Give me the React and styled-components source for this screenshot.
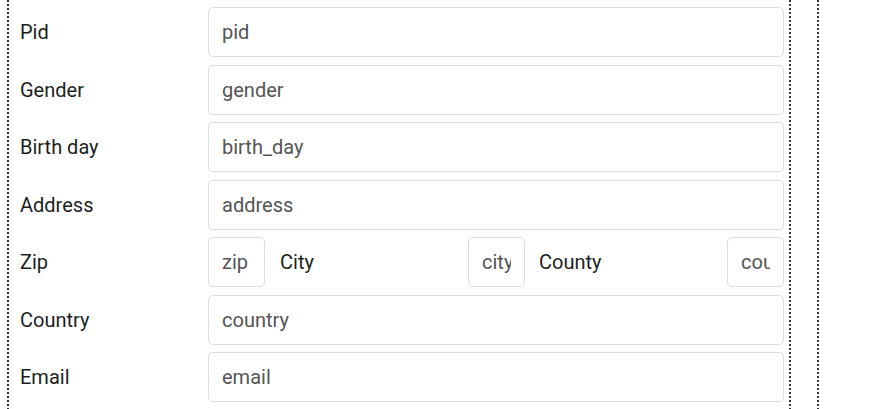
import React from 'react';
import styled, { createGlobalStyle } from "styled-components"

const Global = createGlobalStyle`
    body{
        margin:0;
        font-family:Roboto, "Liberation Sans", sans-serif;
        background:#fff;
    }
`
const dots = "repeating-linear-gradient(to bottom, #333 0 2px, transparent 2px 4px)"

const Page = styled.div`
    display:flex;
    height:409px;
    overflow:hidden;
`
const Panel = styled.div`
    box-sizing:border-box;
    margin-left:7px;
    width:784px;
    padding:7px 7px 0 13px;
    background:${dots} left top / 2px 100% no-repeat, ${dots} right top / 2px 100% no-repeat;
`
const Side = styled.div`
    margin-left:26px;
    flex:1;
    background:${dots} left top / 2px 100% no-repeat;
`
const Form = styled.div`
    display:flex;
    flex-direction:column;
    gap:7.5px;
`
const Row = styled.div`
    display:grid;
    grid-template-columns:${p => p.cols || "188px 1fr"};
    align-items:center;
`
const Label = styled.label`
    font-size:20px;
    color:#1c1f22;
    padding-left:${p => p.indent || 0}px;
`
const Input = styled.input`
    box-sizing:border-box;
    width:100%;
    min-width:0;
    height:50px;
    padding:0 13px;
    border:1px solid #dcdcdc;
    border-radius:5px;
    font-family:Roboto, "Liberation Sans", sans-serif;
    font-size:20px;
    color:#495057;
    outline:none;
    &::placeholder{
        color:#555;
        opacity:1;
    }
`

const fields = [
    ["Pid", "pid"],
    ["Gender", "gender"],
    ["Birth day", "birth_day"],
    ["Address", "address"],
]

const App = () => {
    return (
        <Page>
            <Global />
            <Panel>
                <Form>
                    {fields.map(([label, ph]) => (
                        <Row key={ph}>
                            <Label>{label}</Label>
                            <Input placeholder={ph} />
                        </Row>
                    ))}
                    <Row cols="188px 57px 203px 57px 202px 57px">
                        <Label>Zip</Label>
                        <Input placeholder="zip" />
                        <Label indent={15}>City</Label>
                        <Input placeholder="city" />
                        <Label indent={14}>County</Label>
                        <Input placeholder="county" />
                    </Row>
                    <Row>
                        <Label>Country</Label>
                        <Input placeholder="country" />
                    </Row>
                    <Row>
                        <Label>Email</Label>
                        <Input placeholder="email" />
                    </Row>
                </Form>
            </Panel>
            <Side />
        </Page>
    );
};

export default App;
